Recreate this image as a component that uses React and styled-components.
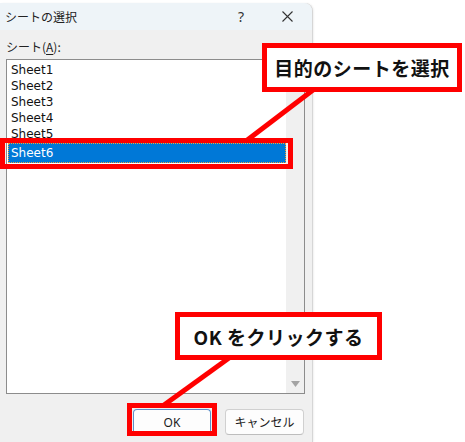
import styled, { createGlobalStyle } from "styled-components";

const GlobalStyle = createGlobalStyle`
  html, body {
    margin: 0;
    padding: 0;
    background: #ffffff;
  }
`;

const Page = styled.div`
  position: relative;
  width: 465px;
  height: 442px;
  overflow: hidden;
  background: #ffffff;
  font-family: "Noto Sans", "Noto Sans CJK JP", sans-serif;
`;

const Dialog = styled.div`
  display: flex;
  flex-direction: column;
  width: 312px;
  height: 439px;
  margin-top: 3px;
  background: #f0f0f0;
  border-radius: 0 8px 0 0;
  box-shadow: 1px 0 0 #d6d6d6, 2px 0 2px rgba(0, 0, 0, 0.06);
  overflow: hidden;
`;

const TitleBar = styled.div`
  display: flex;
  align-items: center;
  height: 27px;
  padding-left: 5px;
  background: #eef4f8;
`;

const Title = styled.div`
  flex: 1;
  font-family: "Noto Sans CJK JP", sans-serif;
  font-size: 12px;
  color: #222;
`;

const TitleButton = styled.div`
  display: flex;
  align-items: center;
  justify-content: center;
  width: ${(p) => p.w}px;
  height: 27px;
  font-size: 14px;
  color: #333;
`;

const Body = styled.div`
  display: flex;
  flex-direction: column;
  padding: 9px 7px 0 6px;
`;

const Label = styled.div`
  font-family: "Noto Sans CJK JP", sans-serif;
  font-size: 12px;
  line-height: 16px;
  color: #222;
  margin-bottom: 4px;

  u {
    text-underline-offset: 2px;
  }
`;

const ListBox = styled.div`
  display: flex;
  height: 333px;
  border: 1px solid #8c8c8c;
  background: #ffffff;
`;

const Items = styled.div`
  flex: 1;
  padding: 2px 0 0 1px;
`;

// DejaVu keeps its glyph box inside the 16px rows
const Item = styled.div`
  height: ${(p) => (p.selected ? 18 : 16)}px;
  line-height: ${(p) => (p.selected ? 18 : 16)}px;
  margin-top: ${(p) => (p.selected ? 1 : 0)}px;
  padding-left: ${(p) => (p.selected ? 2 : 3)}px;
  font-family: "DejaVu Sans", "Noto Sans", sans-serif;
  font-size: 12px;
  color: ${(p) => (p.selected ? "#ffffff" : "#111")};
  background: ${(p) => (p.selected ? "#0078d7" : "transparent")};
  border: ${(p) => (p.selected ? "1px dotted #f3a13a" : "none")};
`;

const ScrollBar = styled.div`
  display: flex;
  flex-direction: column;
  justify-content: flex-end;
  align-items: center;
  width: 18px;
  background: #f0f0f0;
  padding-bottom: 6px;
`;

const ButtonRow = styled.div`
  display: flex;
  justify-content: flex-end;
  gap: 14px;
  margin-top: 15px;
  padding-right: 1px;
`;

const Button = styled.div`
  display: flex;
  align-items: center;
  justify-content: center;
  width: ${(p) => p.w}px;
  height: 26px;
  box-sizing: border-box;
  border-radius: 4px;
  background: #fdfdfd;
  border: 1px solid ${(p) => (p.primary ? "#5b8fc9" : "#d0d0d0")};
  border-bottom-color: ${(p) => (p.primary ? "#2f6fb5" : "#bdbdbd")};
  font-family: "Noto Sans", "Noto Sans CJK JP", sans-serif;
  font-size: 12px;
  color: #1b1b1b;
`;

const Frame = styled.div`
  position: absolute;
  left: ${(p) => p.x}px;
  top: ${(p) => p.y}px;
  width: ${(p) => p.w}px;
  height: ${(p) => p.h}px;
  box-sizing: border-box;
  border: 5px solid #ff0000;
`;

const Callout = styled(Frame)`
  display: flex;
  align-items: center;
  justify-content: center;
  background: #ffffff;
  font-family: "Noto Sans CJK JP", sans-serif;
  font-weight: 700;
  font-size: 19px;
  color: #111;
  letter-spacing: 0.5px;
`;

const Leaders = styled.svg`
  position: absolute;
  left: 0;
  top: 0;
  pointer-events: none;
`;

const sheets = ["Sheet1", "Sheet2", "Sheet3", "Sheet4", "Sheet5", "Sheet6"];

export default function App() {
  return (
    <>
      <GlobalStyle />
      <Page>
        <Dialog>
          <TitleBar>
            <Title>シートの選択</Title>
            <TitleButton w={46}>?</TitleButton>
            <TitleButton w={46}>
              <svg width="11" height="11" viewBox="0 0 11 11">
                <path d="M0.5 0.5 L10.5 10.5 M10.5 0.5 L0.5 10.5" stroke="#333" strokeWidth="1.1" />
              </svg>
            </TitleButton>
            <TitleButton w={2} />
          </TitleBar>
          <Body>
            <Label>
              シート(<u>A</u>):
            </Label>
            <ListBox>
              <Items>
                {sheets.map((s, i) => (
                  <Item key={s} selected={i === 5}>
                    {s}
                  </Item>
                ))}
              </Items>
              <ScrollBar>
                <svg width="9" height="6" viewBox="0 0 9 6">
                  <path d="M0 0 H9 L4.5 6 Z" fill="#a3a3a3" />
                </svg>
              </ScrollBar>
            </ListBox>
            <ButtonRow>
              <Button w={78} primary>
                OK
              </Button>
              <Button w={79}>キャンセル</Button>
            </ButtonRow>
          </Body>
        </Dialog>

        <Frame x={0} y={138} w={293} h={31} />
        <Frame x={127} y={403} w={90} h={33} />

        <Leaders width="465" height="442">
          <line x1="313" y1="90" x2="246" y2="141" stroke="#ff0000" strokeWidth="5" />
          <line x1="229" y1="358" x2="164" y2="405" stroke="#ff0000" strokeWidth="5" />
        </Leaders>

        <Callout x={262} y={43} w={200} h={49}>
          目的のシートを選択
        </Callout>
        <Callout x={175} y={312} w={207} h={48}>
          OK をクリックする
        </Callout>
      </Page>
    </>
  );
}
